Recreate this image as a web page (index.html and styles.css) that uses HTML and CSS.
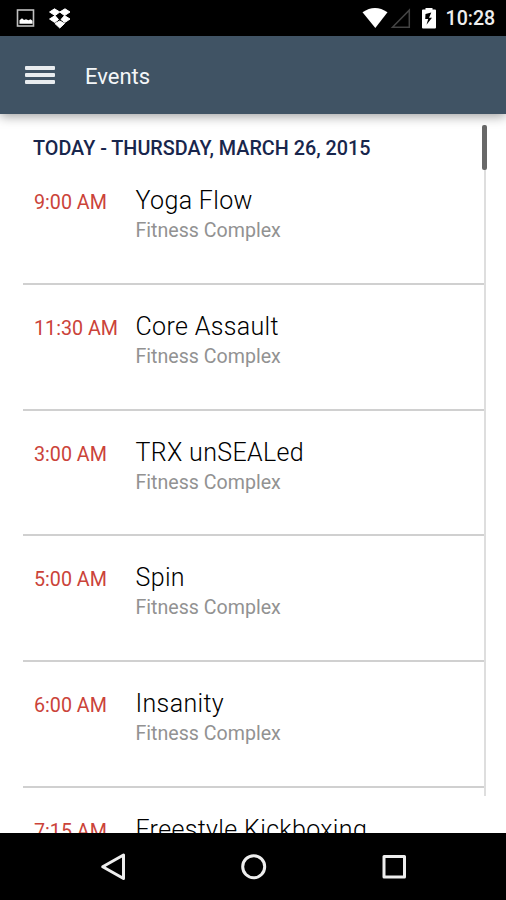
FILE: index.html
```html
<!DOCTYPE html>
<html lang="en">
<head>
<meta charset="utf-8">
<title>Events</title>
<link rel="stylesheet" href="styles.css">
</head>
<body>
<div class="screen">
  <div class="status">
    <svg class="status-left" width="90" height="36" viewBox="0 0 90 36">
      <rect x="17.500" y="10" width="16" height="16" fill="none" stroke="#c0c0c0" stroke-width="1.600"/>
      <path d="M19.500 23.700v-3.500l2.500-2 2 1.700 2-.7 2.500 1 2-1 2 1.500v3z" fill="#fff"/>
      <path d="M54.500 8.800l5.250 3.200-4.700 3.600-5.500-3.600zM65 8.800l5 3.200-5.500 3.600-4.750-3.600zM55 15.600l3.500 3.900-3.750 3-5.200-3.500zM64.500 15.600l5.500 3.400-5.200 3.500-3.800-3zM59.750 21l4.800 2.500-4.800 4.500-4.800-4.500z" fill="#fff" stroke="#fff" stroke-width="1" stroke-linejoin="round"/>
    </svg>
    <svg class="status-right" width="82" height="36" viewBox="360 0 82 36">
      <path d="M362.500 12.300Q375 3.500 387.500 12.300L375.300 28z" fill="#fff"/>
      <path d="M409.300 10.200V27.200H392.500z" fill="none" stroke="#444" stroke-width="1.500"/>
      <path d="M425.500 8h7v1.500h2.500q1 0 1 1v17q0 1-1 1h-12q-1 0-1-1v-17q0-1 1-1h2.500z" fill="#fff"/>
      <path d="M431.300 12.500l-5.800 1.500-.3 5h3l-1.700 5.800 5.500-7h-3z" fill="#000"/>
    </svg>
    <span class="clock">10:28</span>
  </div>
  <header class="appbar">
    <div class="menu"><i></i><i></i><i></i></div>
    <h1>Events</h1>
  </header>
  <main class="content">
    <div class="list">
      <h2>TODAY - THURSDAY, MARCH 26, 2015</h2>
      <div class="event"><span class="time">9:00 AM</span><div><h3>Yoga Flow</h3><p>Fitness Complex</p></div></div>
      <div class="event"><span class="time">11:30 AM</span><div><h3>Core Assault</h3><p>Fitness Complex</p></div></div>
      <div class="event"><span class="time">3:00 AM</span><div><h3>TRX unSEALed</h3><p>Fitness Complex</p></div></div>
      <div class="event"><span class="time">5:00 AM</span><div><h3>Spin</h3><p>Fitness Complex</p></div></div>
      <div class="event"><span class="time">6:00 AM</span><div><h3>Insanity</h3><p>Fitness Complex</p></div></div>
      <div class="event"><span class="time">7:15 AM</span><div><h3>Freestyle Kickboxing</h3></div></div>
    </div>
    <div class="track"><div class="thumb"></div></div>
  </main>
  <nav class="navbar">
    <svg width="506" height="67" viewBox="0 833 506 67" fill="none" stroke="#eee" stroke-width="3" stroke-linejoin="round">
      <path d="M123.500 855V878.500L102.700 866.700z"/>
      <circle cx="253.700" cy="866.700" r="11"/>
      <rect x="384" y="856.500" width="20.500" height="20.500"/>
    </svg>
  </nav>
</div>
</body>
</html>
```
FILE: styles.css
```css
* { box-sizing: border-box; }
body, h1, h2, h3, p { margin: 0; font-weight: 400; }
body { font-family: Roboto, "Liberation Sans", sans-serif; background: #fff; }
.screen { width: 506px; height: 900px; display: flex; flex-direction: column; overflow: hidden; }
.status { height: 36px; flex: none; background: #000; display: flex; align-items: center; }
.status svg { display: block; flex: none; }
.status-right { margin-left: 270px; }
.clock { margin-left: 3.500px; color: #eee; font-size: 19.600px; font-weight: 500; line-height: 36px; padding-top: 2px; white-space: nowrap; }
.appbar { height: 78px; flex: none; background: #405364; display: flex; align-items: center; padding-left: 25px; box-shadow: 0 2px 11px rgba(0, 0, 0, .4); z-index: 1; }
.menu { width: 30px; height: 18px; display: flex; flex-direction: column; justify-content: space-between; margin-top: -1px; }
.menu i { height: 4px; border-radius: 1px; background: #e9ecef; }
h1 { margin-left: 30px; padding-top: 2px; font-size: 22px; color: #f4f6f8; }
.content { height: 719px; flex: none; display: flex; overflow: hidden; }
.list { width: 461px; margin-left: 23px; flex: none; }
h2 { height: 45.400px; padding: 23.400px 0 0 10px; font-size: 19.800px; line-height: 24px; font-weight: 500; color: #18264c; white-space: nowrap; }
.event { height: 125.630px; border-bottom: 2px solid #d0d0d0; display: grid; grid-template-columns: 101.500px 1fr; padding: 27px 0 0 11px; }
.time { font-size: 19.700px; line-height: 33px; color: #cb4339; white-space: nowrap; }
h3 { font-size: 25px; line-height: 29px; font-weight: 300; color: #000; letter-spacing: .35px; white-space: nowrap; }
.event p { font-size: 19.600px; line-height: 32px; color: #929292; white-space: nowrap; }
.track { width: 2px; height: 671px; margin-top: 11px; background: #dedede; }
.thumb { width: 5px; height: 45px; margin-left: -2px; border-radius: 2px; background: #686868; }
.navbar { height: 67px; flex: none; background: #000; }
.navbar svg { display: block; }
```
